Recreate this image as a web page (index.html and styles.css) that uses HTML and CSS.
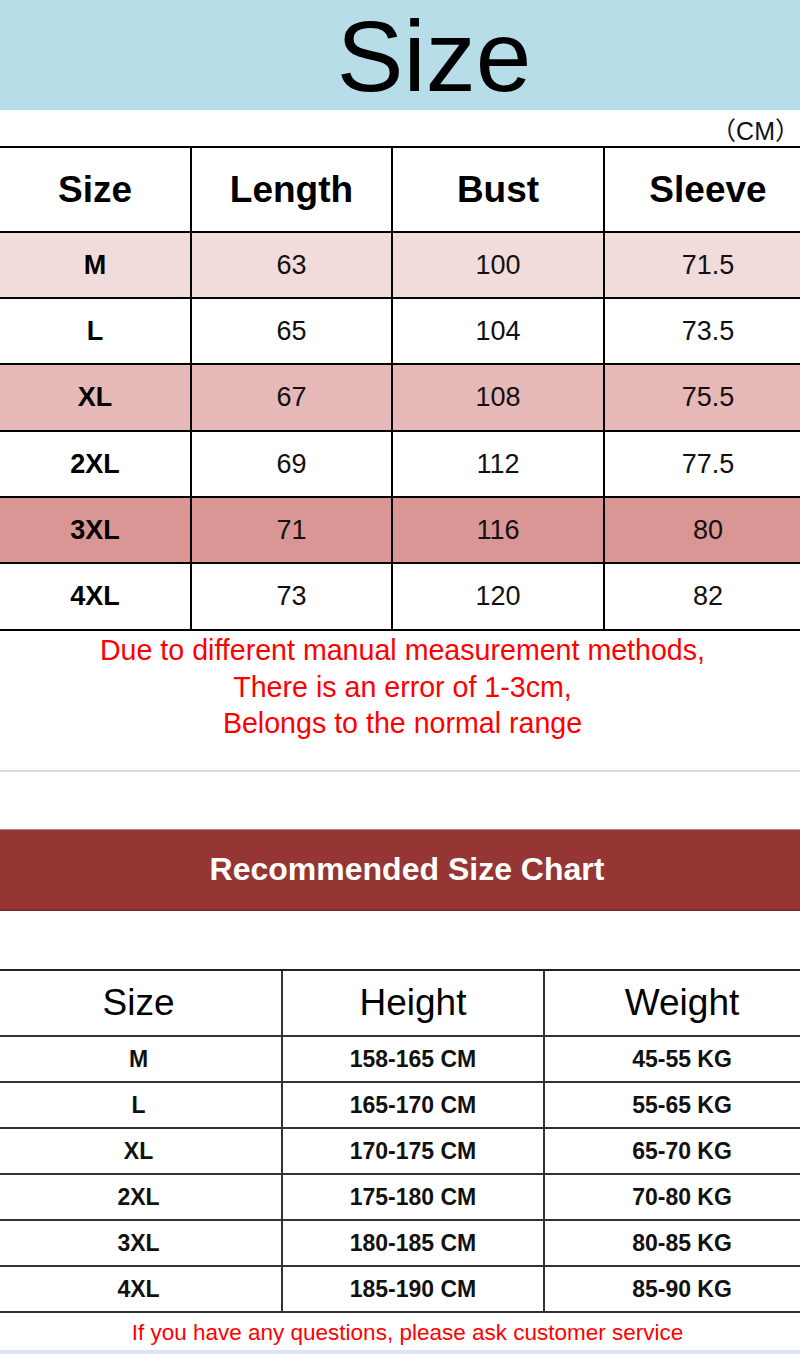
FILE: index.html
```html
<!DOCTYPE html>
<html lang="en">
<head>
<meta charset="utf-8">
<title>Size Chart</title>
<link rel="stylesheet" href="styles.css">
</head>
<body>
<div class="page">
  <header class="title-band"><h1 class="title">Size</h1></header>
  <div class="unit">（CM）</div>
  <table class="measure">
    <colgroup><col class="m-c1"><col class="m-c2"><col class="m-c3"><col class="m-c4"></colgroup>
    <thead>
      <tr><th>Size</th><th>Length</th><th>Bust</th><th>Sleeve</th></tr>
    </thead>
    <tbody>
      <tr class="tint-1"><td class="sz">M</td><td>63</td><td>100</td><td>71.5</td></tr>
      <tr><td class="sz">L</td><td>65</td><td>104</td><td>73.5</td></tr>
      <tr class="tint-2 tall"><td class="sz">XL</td><td>67</td><td>108</td><td>75.5</td></tr>
      <tr><td class="sz">2XL</td><td>69</td><td>112</td><td>77.5</td></tr>
      <tr class="tint-3"><td class="sz">3XL</td><td>71</td><td>116</td><td>80</td></tr>
      <tr class="tall"><td class="sz">4XL</td><td>73</td><td>120</td><td>82</td></tr>
    </tbody>
  </table>
  <p class="note">Due to different manual measurement methods,<br>There is an error of 1-3cm,<br>Belongs to the normal range</p>
  <hr class="divider">
  <div class="banner"><h2 class="banner-title">Recommended Size Chart</h2></div>
  <table class="recommend">
    <colgroup><col class="r-c1"><col class="r-c2"><col class="r-c3"></colgroup>
    <thead>
      <tr><th>Size</th><th>Height</th><th>Weight</th></tr>
    </thead>
    <tbody>
      <tr><td>M</td><td>158-165 CM</td><td>45-55 KG</td></tr>
      <tr><td>L</td><td>165-170 CM</td><td>55-65 KG</td></tr>
      <tr><td>XL</td><td>170-175 CM</td><td>65-70 KG</td></tr>
      <tr><td>2XL</td><td>175-180 CM</td><td>70-80 KG</td></tr>
      <tr><td>3XL</td><td>180-185 CM</td><td>80-85 KG</td></tr>
      <tr><td>4XL</td><td>185-190 CM</td><td>85-90 KG</td></tr>
    </tbody>
  </table>
  <p class="footer-note">If you have any questions, please ask customer service</p>
  <div class="bottom-strip"></div>
</div>
</body>
</html>
```

FILE: styles.css
```css
* { box-sizing: border-box; }

html, body {
  margin: 0;
  padding: 0;
  background: #ffffff;
}

body {
  font-family: "Liberation Sans", Arial, "Noto Sans CJK SC", sans-serif;
  color: #000;
}

.page {
  width: 800px;
  overflow: hidden;
  display: flex;
  flex-direction: column;
}

.title-band {
  height: 110px;
  background: #b7dee8;
  display: flex;
  justify-content: center;
  padding-left: 68px;
  padding-top: 2px;
}

.title {
  margin: 0;
  font-weight: normal;
  font-size: 100px;
  line-height: 108px;
}

.unit {
  height: 36px;
  font-size: 25px;
  line-height: 42px;
  text-align: right;
  font-family: "Liberation Sans", "Noto Sans CJK SC", sans-serif;
  color: #111;
}

/* Table 1 */
.measure {
  width: 811px;
  flex: none;
  table-layout: fixed;
  border-collapse: separate;
  border-spacing: 0;
  border-top: 2px solid #000;
}
.m-c1 { width: 190px; }
.m-c2 { width: 201px; }
.m-c3 { width: 212px; }
.m-c4 { width: 208px; }

.measure th,
.measure td {
  padding: 0;
  text-align: center;
  vertical-align: middle;
  border-bottom: 2px solid #000;
}
.measure th + th,
.measure td + td {
  border-left: 2px solid #000;
}
.measure th {
  height: 85px;
  font-size: 37px;
  font-weight: bold;
}
.measure td {
  height: 66px;
  font-size: 27px;
  color: #111;
}
.measure .tall td {
  height: 67px;
}
.measure td.sz {
  font-weight: bold;
  color: #000;
}
.tint-1 td { background: #f2dcdb; }
.tint-2 td { background: #e6b8b7; }
.tint-3 td { background: #da9694; }

.note {
  margin: 1px 0 0;
  height: 110px;
  color: #ff0000;
  font-size: 28.6px;
  line-height: 36.5px;
  text-align: center;
  padding-left: 5px;
}

.divider {
  margin: 28px 0 0;
  border: 0;
  height: 2px;
  background: #d3dbe4;
}

.banner {
  margin-top: 57px;
  height: 82px;
  background: #963634;
  border-top: 1px solid #b08584;
  border-bottom: 2px solid #7d2c2a;
  display: flex;
  align-items: center;
  justify-content: center;
  padding-left: 14px;
}
.banner-title {
  margin: 0;
  color: #ffffff;
  font-size: 32px;
  font-weight: bold;
}

/* Table 2 */
.recommend {
  margin-top: 58px;
  width: 819px;
  flex: none;
  table-layout: fixed;
  border-collapse: separate;
  border-spacing: 0;
  border-top: 2px solid #222;
}
.r-c1 { width: 281px; }
.r-c2 { width: 262px; }
.r-c3 { width: 276px; }

.recommend th,
.recommend td {
  padding: 0;
  text-align: center;
  vertical-align: middle;
  border-bottom: 2px solid #333;
}
.recommend th + th,
.recommend td + td {
  border-left: 2px solid #333;
}
.recommend th {
  height: 66px;
  font-size: 37px;
  font-weight: normal;
}
.recommend td {
  height: 46px;
  font-size: 23px;
  font-weight: bold;
  color: #111;
}
.recommend td:first-child,
.recommend th:first-child {
  padding-right: 4px;
}

.footer-note {
  margin: 0;
  height: 37px;
  color: #ff0000;
  font-size: 22.5px;
  line-height: 40px;
  text-align: center;
  padding-left: 15px;
}

.bottom-strip {
  height: 4px;
  background: #dde5ee;
}
```
